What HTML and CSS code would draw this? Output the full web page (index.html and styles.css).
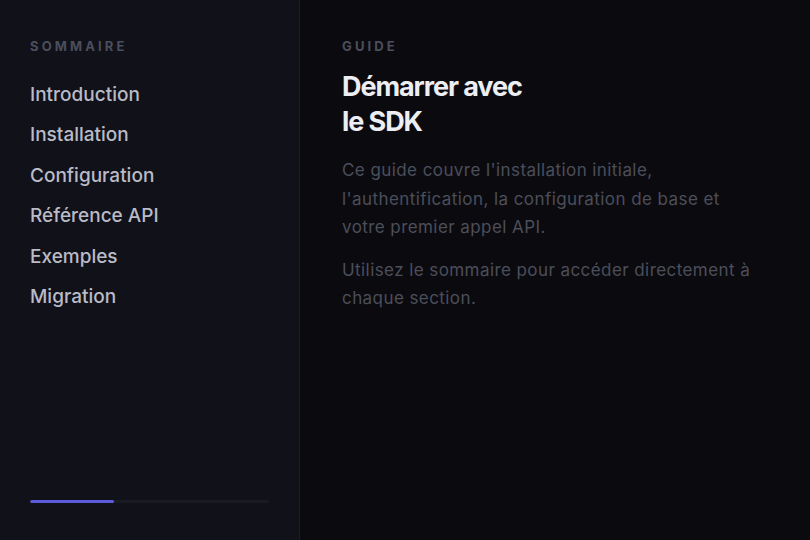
FILE: index.html
```html
<!DOCTYPE html>
<html lang="fr">
<head>
<meta charset="UTF-8">
<meta name="viewport" content="width=device-width, initial-scale=1.0">
<title>Démarrer avec le SDK</title>
<link rel="stylesheet" href="styles.css">
</head>
<body>
    <div class="layout">
        <aside class="sidebar">
            <div class="label">Sommaire</div>
            <nav class="toc">
                <a href="#intro">Introduction</a>
                <a href="#install">Installation</a>
                <a href="#config">Configuration</a>
                <a href="#api">Référence API</a>
                <a href="#exemples">Exemples</a>
                <a href="#migration">Migration</a>
            </nav>
            <div class="progress">
                <div class="progress-fill" style="width: 35%;"></div>
            </div>
        </aside>

        <main class="content">
            <div class="label">Guide</div>
            <h1>Démarrer avec le SDK</h1>
            <p>Ce guide couvre l'installation initiale, l'authentification, la configuration de base et votre premier appel API.</p>
            <p>Utilisez le sommaire pour accéder directement à chaque section.</p>
        </main>
    </div>
</body>
</html>
```

FILE: styles.css
```css
body {
    margin: 0;
    padding: 0;
    font-family: Inter, 'Noto Sans', sans-serif;
    background-color: #0b0b0f;
    color: #e6e7ec;
}

.layout {
    display: flex;
    height: 100vh;
}

.sidebar {
    width: 300px;
    box-sizing: border-box;
    border-right: 1px solid #1b1c24;
    background-color: #111119;
    display: flex;
    flex-direction: column;
    padding: 38px 30px 37px 30px;
}

.label {
    font-size: 13px;
    font-weight: 700;
    letter-spacing: 0.24em;
    text-transform: uppercase;
    color: #4b4e5c;
    line-height: 16px;
}

.toc {
    display: flex;
    flex-direction: column;
    margin-top: 21px;
}

.toc a {
    color: #b9bbc6;
    text-decoration: none;
    font-size: 19px;
    font-weight: 500;
    line-height: 40.4px;
}

.progress {
    margin-top: auto;
    height: 3px;
    border-radius: 2px;
    background-color: #1a1b22;
    overflow: hidden;
}

.progress-fill {
    height: 100%;
    border-radius: 2px;
    background-color: #5b5ad8;
}

.content {
    flex: 1;
    padding: 38px 42px;
}

.content h1 {
    margin: 15px 0 17px 0;
    max-width: 190px;
    font-size: 27px;
    font-weight: 700;
    line-height: 35px;
    letter-spacing: -0.04em;
    color: #eceef3;
}

.content p {
    margin: 0 0 14px 0;
    max-width: 426px;
    font-size: 17px;
    line-height: 28.5px;
    letter-spacing: 0.025em;
    color: #4b4e5b;
}
```
